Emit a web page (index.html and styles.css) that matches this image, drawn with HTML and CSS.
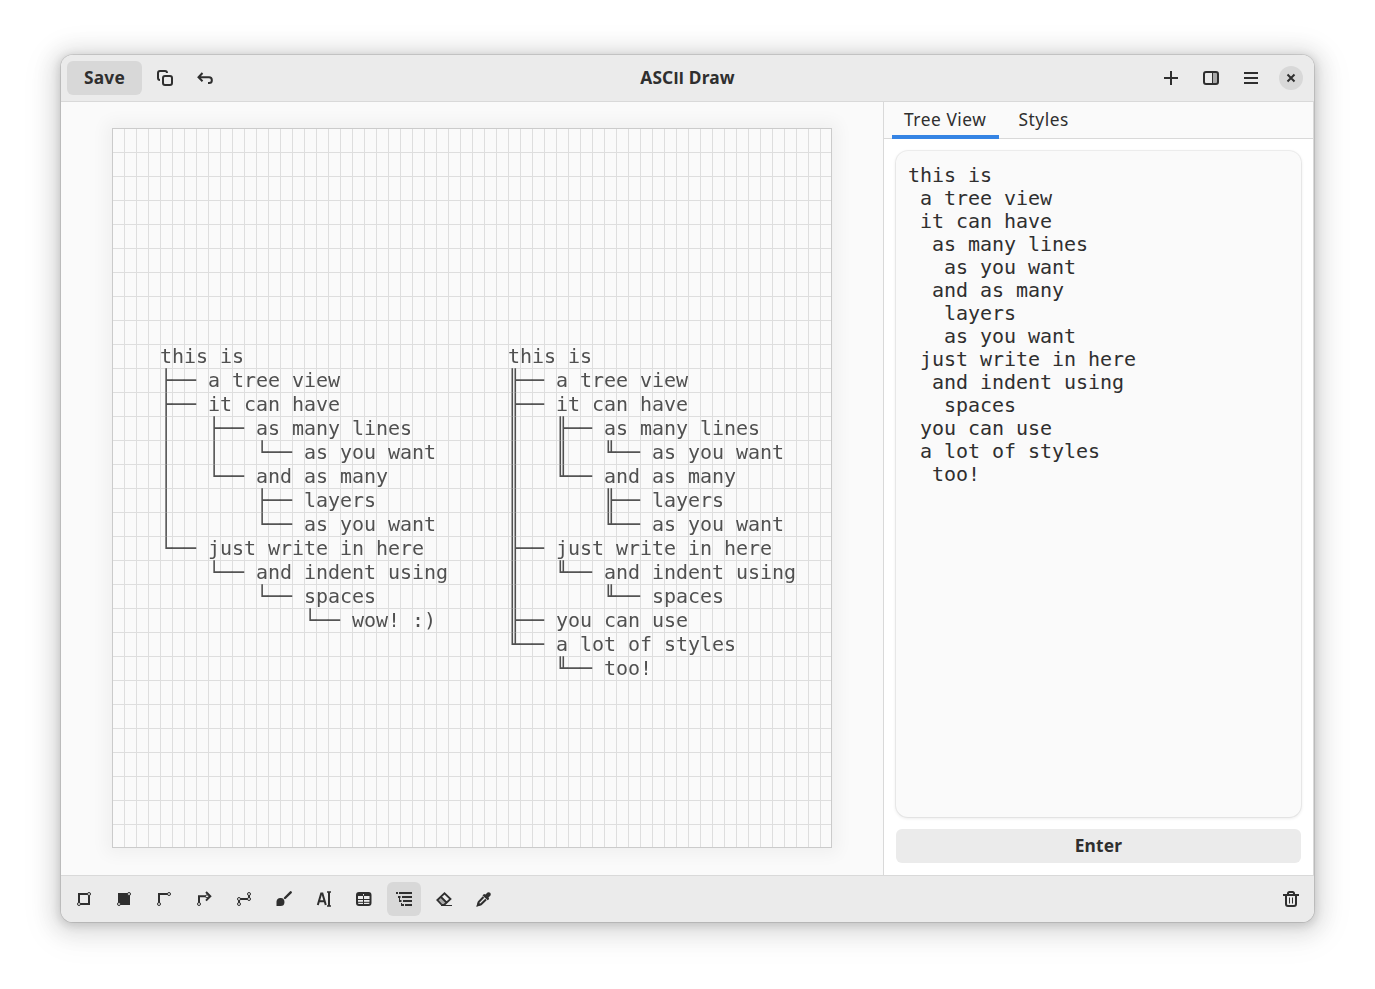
FILE: index.html
```html
<!DOCTYPE html>
<html lang="en">
<head>
<meta charset="utf-8">
<title>ASCII Draw</title>
<link rel="stylesheet" href="styles.css">
</head>
<body>
<div class="window">
  <header class="headerbar">
    <div class="group">
      <button class="btn save">Save</button>
      <button class="btn icon"><svg viewBox="0 0 16 16"><path d="M3 10A2 2 0 0 1 1 8V3a2 2 0 0 1 2-2h5a2 2 0 0 1 2 2" class="line"/><rect x="6" y="6" width="9" height="9" rx="2" class="line"/></svg></button>
      <button class="btn icon"><svg viewBox="0 0 16 16"><path d="M5.500 3 1.500 7.300l4 4M2 7.300h10a2.850 2.850 0 0 1 0 5.700H11" class="line"/></svg></button>
    </div>
    <h1 class="title">ASC<span class="plain">II</span> Draw</h1>
    <div class="group">
      <button class="btn icon"><svg viewBox="0 0 16 16"><path d="M8 1v14M1 8h14" class="line"/></svg></button>
      <button class="btn icon"><svg viewBox="0 0 16 16"><path d="M10 2h4v12h-4z" fill="#a9a9a9"/><rect x="1" y="2" width="14" height="12" rx="2" class="line"/><path d="M9.500 2v12" class="line thin"/></svg></button>
      <button class="btn icon"><svg viewBox="0 0 16 16"><path d="M1 3h14M1 8h14M1 13h14" class="line"/></svg></button>
      <button class="btn icon"><span class="close"><svg viewBox="0 0 16 16"><path d="m4.500 4.500 7 7m0-7-7 7" class="line"/></svg></span></button>
    </div>
  </header>
  <main class="content">
    <section class="canvas-area">
      <div class="canvas">
<pre class="tree">this is
├── a tree view
├── it can have
│   ├── as many lines
│   │   └── as you want
│   └── and as many
│       ├── layers
│       └── as you want
└── just write in here
    └── and indent using
        └── spaces
            └── wow! :)</pre>
<pre class="tree">this is
╟── a tree view
╟── it can have
║   ╟── as many lines
║   ║   ╙── as you want
║   ╙── and as many
║       ╟── layers
║       ╙── as you want
╟── just write in here
║   ╙── and indent using
║       ╙── spaces
╟── you can use
╙── a lot of styles
    ╙── too!</pre>
      </div>
    </section>
    <aside class="sidebar">
      <nav class="tabs"><span class="tab active">Tree View</span><span class="tab">Styles</span></nav>
      <div class="panel">
<pre class="editor">this is
 a tree view
 it can have
  as many lines
   as you want
  and as many
   layers
   as you want
 just write in here
  and indent using
   spaces
 you can use
 a lot of styles
  too!</pre>
        <button class="btn enter">Enter</button>
      </div>
    </aside>
  </main>
  <footer class="toolbar">
    <div class="group">
      <button class="btn icon"><svg viewBox="0 0 16 16"><path d="M12 3H3v9m1 1h9V4" class="line"/><circle cx="13" cy="3" r="1.500" class="node"/><circle cx="3" cy="13" r="1.500" class="node"/></svg></button>
      <button class="btn icon"><svg viewBox="0 0 16 16"><path d="M2 2h12v12H2z" class="solid"/><circle cx="13" cy="3" r="1.500" class="node"/><circle cx="3" cy="13" r="1.500" class="node"/></svg></button>
      <button class="btn icon"><svg viewBox="0 0 16 16"><path d="M12 3H3v9" class="line"/><circle cx="13" cy="3" r="1.500" class="node"/><circle cx="3" cy="13" r="1.500" class="node"/></svg></button>
      <button class="btn icon"><svg viewBox="0 0 16 16"><path d="M3 12V5.300h7M10 1l4.300 4.300L10 9.600" class="line"/><circle cx="11" cy="5.300" r="1.500" class="node"/><circle cx="3" cy="13" r="1.500" class="node"/></svg></button>
      <button class="btn icon"><svg viewBox="0 0 16 16"><path d="M3 12V8h10V4" class="line"/><circle cx="13" cy="3" r="1.500" class="node"/><circle cx="13" cy="8" r="1.500" class="node"/><circle cx="3" cy="8" r="1.500" class="node"/><circle cx="3" cy="13" r="1.500" class="node"/></svg></button>
      <button class="btn icon"><svg viewBox="0 0 16 16"><path d="m9 7 5.700-5.700" class="line brush"/><path d="M.500 15v-4.500a4 4 0 1 1 4 4.500z" class="solid"/></svg></button>
      <button class="btn icon"><svg viewBox="0 0 16 16"><path d="M1.800 14 5.200 2.500h1.200L9.800 14M3 10.300h5.600" class="line"/><path d="M13 1v14" class="line"/><path d="M11 1h4M11 15h4" class="line bar"/></svg></button>
      <button class="btn icon"><svg viewBox="0 0 16 16"><rect x="1" y="2" width="13.500" height="12" rx="2" class="line"/><path d="M1 2.500h13.500V5H1z" class="solid"/><path d="M7.500 4v10M1 8.500h14M1 11.300h14" class="line thin"/><path d="M7.500 3v1.500" stroke="#ebebeb"/></svg></button>
      <button class="btn icon selected"><svg viewBox="0 0 16 16"><path d="M0 2h2M3 2h13M6 6h10M7 10h9M9 14h7M2 6h2.500M3 10h2.500M5 14h3" class="line"/><path d="M3.500 6v4M5.500 12v2" class="line thin"/></svg></button>
      <button class="btn icon"><svg viewBox="0 0 16 16"><path d="m1 9 3.500-3.500L10.500 11 7.500 14H5z" fill="#a9a9a9"/><path d="M5.500 13.500 1.300 9l7.200-6.700 6 5.700L8 14H5.500M4.500 5.500l6 6" class="line eraser"/><path d="M5 14.500h11" class="line thin"/></svg></button>
      <button class="btn icon"><svg viewBox="0 0 16 16"><path d="M9.500 3.500 11.500 1.500a2.200 2.200 0 0 1 3 3l-2 2 .7 1.500-1.500 1.200L6.500 4.500 8 3z" class="solid"/><path d="m7.500 6-4.800 5-.9 3.200 3.200-.9L10 8.500" class="line"/><path d="m.500 15.500 1.500-4.500 3 3z" class="solid"/></svg></button>
    </div>
    <button class="btn icon"><svg viewBox="0 0 16 16"><path d="M0 4h16M3 4v9a2 2 0 0 0 2 2h6a2 2 0 0 0 2-2V4M5 4V2.500A1.500 1.500 0 0 1 6.500 1h3A1.500 1.500 0 0 1 11 2.500V4" class="line"/><path d="M6.500 6.500v6M9.500 6.500v6" class="line thin"/></svg></button>
  </footer>
</div>
</body>
</html>
```
FILE: styles.css
```css
* { box-sizing: border-box; }
body {
  margin: 0;
  height: 989px;
  padding: 55px 61px;
  overflow: hidden;
  background: #fff;
  color: #2f2f2f;
  font-family: "Noto Sans", sans-serif;
}
.window {
  width: 1253px;
  height: 867px;
  display: flex;
  flex-direction: column;
  border-radius: 12px;
  overflow: hidden;
  background: #fafafa;
  box-shadow: 0 0 0 1px rgba(0,0,0,.1), 0 2px 8px 2px rgba(0,0,0,.13), 0 3px 20px 10px rgba(0,0,0,.09), 0 6px 32px 16px rgba(0,0,0,.04);
}
.headerbar, .toolbar {
  height: 47px;
  flex: none;
  display: grid;
  align-items: center;
  padding: 0 6px;
  background: #ebebeb;
}
.headerbar { grid-template-columns: 1fr auto 1fr; border-bottom: 1px solid #d9d9d9; }
.headerbar .group:last-child { justify-content: flex-end; }
.toolbar { grid-template-columns: 1fr auto; border-top: 1px solid #d9d9d9; }
.group { display: flex; gap: 6px; }
.title { margin: 0; padding-bottom: 2px; font-size: 17.333px; line-height: 24px; font-weight: 700; letter-spacing: .15px; }
.plain { font-family: Roboto, sans-serif; letter-spacing: .3px; }
.btn {
  height: 34px;
  padding: 0;
  border: 0;
  border-radius: 6px;
  background: none;
  color: inherit;
  font: 700 17.333px/24px "Noto Sans", sans-serif;
}
.icon { width: 34px; display: grid; place-items: center; }
.icon svg { width: 16px; height: 16px; display: block; }
.save { width: 75px; padding-bottom: 2px; letter-spacing: .2px; background: #d8d8d8; }
.selected { background: #d8d8d8; }
.close { width: 24px; height: 24px; border-radius: 50%; background: #d8d8d8; display: grid; place-items: center; }
.line { fill: none; stroke: #2f2f2f; stroke-width: 2; }
.thin { stroke-width: 1; }
.bar { stroke-width: 1.5; }
.eraser { stroke-width: 1.8; }
.brush { stroke-width: 2.4; stroke-linecap: round; }
.solid { fill: #2f2f2f; }
.node { fill: #ebebeb; stroke: #2f2f2f; stroke-width: 1; }
.content { flex: 1; min-height: 0; display: flex; }
.canvas-area { flex: 1; padding: 26px 51px; }
.canvas {
  width: 720px;
  height: 720px;
  display: flex;
  gap: 60px;
  padding: 216px 0 0 48px;
  background:
    linear-gradient(90deg, #dedede 1px, transparent 1px) 0 0 / 12px 24px,
    linear-gradient(#dedede 1px, transparent 1px) 0 0 / 12px 24px,
    #fafafa;
  box-shadow: inset 0 0 0 1px #cbcbcb, 0 0 16px 6px rgba(0,0,0,.045);
}
pre { margin: 0; font-family: "DejaVu Sans Mono", monospace; font-size: 20px; letter-spacing: -.041px; }
.tree { width: 288px; line-height: 24px; color: #505050; will-change: transform; }
.sidebar { width: 431px; display: flex; flex-direction: column; background: #fff; border-left: 1px solid #d9d9d9; border-right: 1px solid #d9d9d9; }
.tabs { height: 37px; flex: none; display: flex; gap: 8px; padding-left: 8px; background: #fafafa; border-bottom: 1px solid #d9d9d9; }
.tab { height: 37px; padding: 0 12px; font-size: 17.333px; line-height: 34px; letter-spacing: .55px; }
.active { box-shadow: inset 0 -4px #3584e4; }
.panel { flex: 1; display: flex; flex-direction: column; gap: 12px; padding: 12px; }
.editor {
  flex: 1;
  padding: 13px 12px;
  border-radius: 12px;
  background: #fafafa;
  line-height: 23px;
  box-shadow: 0 0 0 1px rgba(0,0,0,.05), 0 1px 3px 1px rgba(0,0,0,.07);
}
.enter { padding-bottom: 2px; letter-spacing: .2px; background: #ebebeb; }
```
